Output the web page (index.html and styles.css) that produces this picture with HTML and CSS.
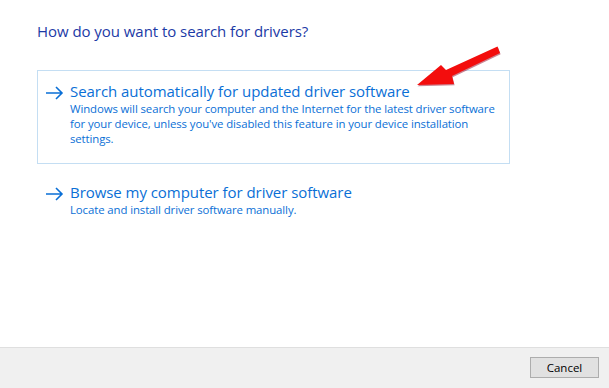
FILE: index.html
```html
<!DOCTYPE html>
<html>
<head>
<meta charset="utf-8">
<link rel="stylesheet" href="styles.css">
</head>
<body>
<div class="page">
  <main class="content">
    <h1 class="title">How do you want to search for drivers?</h1>
    <div class="option option-selected">
      <svg class="arrow" width="19" height="14" viewBox="0 0 19 14"><path d="M1 7H17M11 1L17 7L11 13" fill="none" stroke="#0a6fd6" stroke-width="1.6"/></svg>
      <div class="option-text">
        <div class="option-head">Search automatically for updated driver software</div>
        <div class="option-desc">Windows will search your computer and the Internet for the latest driver software for your device, unless you've disabled this feature in your device installation settings.</div>
      </div>
      <svg class="pointer" width="100" height="50" viewBox="0 0 100 50">
        <path d="M83.5 2.5 L86 9 L38 32 L40 40 L3 41 L27 21 L32 26 Z" fill="#a0203a" opacity="0.55" transform="translate(0.6 1.2)"/>
        <path d="M83.5 2.5 L86 9 L38 32 L40 40 L3 41 L27 21 L32 26 Z" fill="#f30d0d"/>
      </svg>
    </div>
    <div class="option">
      <svg class="arrow" width="19" height="14" viewBox="0 0 19 14"><path d="M1 7H17M11 1L17 7L11 13" fill="none" stroke="#0a6fd6" stroke-width="1.6"/></svg>
      <div class="option-text">
        <div class="option-head">Browse my computer for driver software</div>
        <div class="option-desc">Locate and install driver software manually.</div>
      </div>
    </div>
  </main>
  <footer class="footer">
    <button class="btn">Cancel</button>
  </footer>
</div>
</body>
</html>
```

FILE: styles.css
```css
* { box-sizing: border-box; }
html, body { margin: 0; padding: 0; }
body {
  width: 609px;
  height: 388px;
  background: #ffffff;
  font-family: "Open Sans", "Noto Sans", sans-serif;
  overflow: hidden;
}
.page {
  display: flex;
  flex-direction: column;
  height: 388px;
}
.content {
  flex: 1;
  padding: 19px 0 0 37px;
}
.title {
  margin: 0 0 27px 0;
  font-weight: 400;
  font-size: 15px;
  line-height: 24px;
  color: #1c3aa6;
  letter-spacing: -0.05px;
}
.option {
  position: relative;
  display: flex;
  align-items: flex-start;
  width: 473px;
  padding: 10px 0 17px 7px;
  border: 1px solid transparent;
  color: #0a6fd6;
}
.option-selected {
  border-color: #c4def3;
  margin-bottom: 7px;
}
.arrow {
  flex: none;
  margin: 5px 6px 0 0;
}
.option-text {
  flex: 1;
}
.option-head {
  font-size: 15px;
  line-height: 20px;
  letter-spacing: -0.05px;
}
.option-desc {
  font-size: 11.4px;
  line-height: 15px;
  letter-spacing: -0.1px;
}
.pointer {
  position: absolute;
  left: 376px;
  top: -27px;
}
.footer {
  flex: none;
  height: 41px;
  background: #f0f0f0;
  border-top: 1px solid #dfdfdf;
  display: flex;
  justify-content: flex-end;
  align-items: flex-start;
  padding: 9px 10px 0 0;
}
.btn {
  width: 69px;
  height: 21px;
  background: #e1e1e1;
  border: 1px solid #adadad;
  font-family: "Open Sans", "Noto Sans", sans-serif;
  font-size: 11.5px;
  color: #000000;
  padding: 0;
  line-height: 18px;
}
```
